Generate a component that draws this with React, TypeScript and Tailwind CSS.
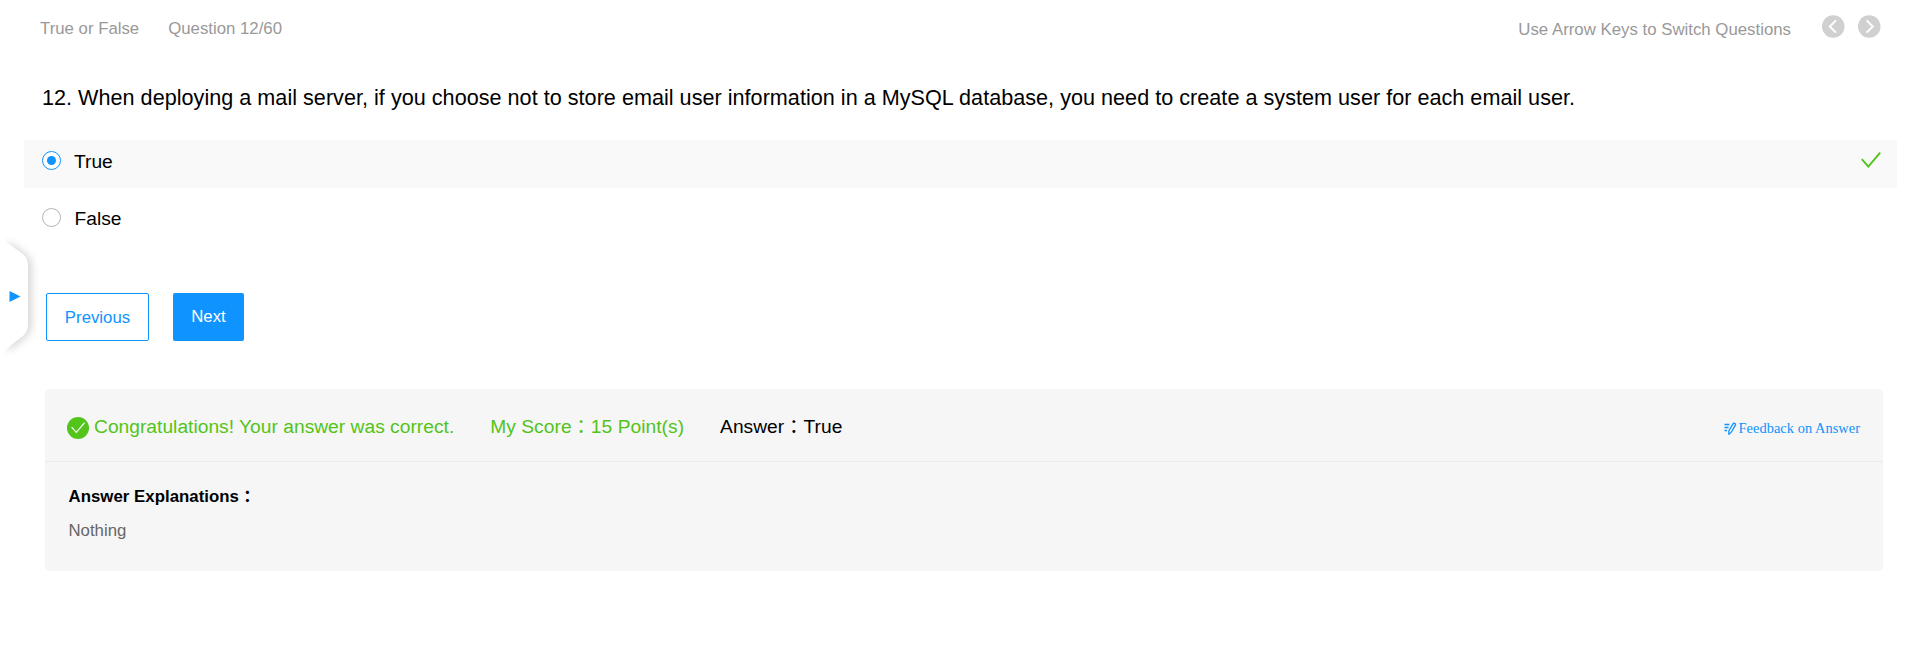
import React from "react";

const SANS = "font-['Liberation_Sans','Noto_Sans_CJK_JP',sans-serif]";

function ArrowButton({ dir }: { dir: "left" | "right" }) {
  return (
    <button aria-label={dir} className="block h-[23px] w-[23px]">
      <svg viewBox="0 0 23 23" className="h-full w-full">
        <circle cx="11.2" cy="11.5" r="11.3" fill="#d0d0d0" />
        <path
          d={dir === "left" ? "M14 5.4 L7.8 11.5 L14 17.6" : "M8.6 5.4 L14.8 11.5 L8.6 17.6"}
          fill="none"
          stroke="#fff"
          strokeWidth="2"
        />
      </svg>
    </button>
  );
}

function Radio({ checked }: { checked?: boolean }) {
  return checked ? (
    <span className="flex h-[19px] w-[19px] items-center justify-center rounded-full border border-[#0f93ff] bg-white">
      <span className="h-[9px] w-[9px] rounded-full bg-[#0f93ff]" />
    </span>
  ) : (
    <span className="block h-[19px] w-[19px] rounded-full border border-[#b4b4b4] bg-white" />
  );
}

function Colon() {
  return <span className="relative top-px">：</span>;
}

export default function App() {
  return (
    <div className={`relative h-[671px] w-full overflow-hidden bg-white text-black ${SANS}`}>
      <header className="flex h-[46px] items-start justify-between pr-[38px] pl-10 text-[16.8px] leading-6 text-[#999]">
        <div className="flex gap-[29px] pt-[17px]">
          <span>True or False</span>
          <span>Question 12/60</span>
        </div>
        <div className="flex items-start">
          <span className="mr-[31px] pt-[18px] tracking-[0.01px]">Use Arrow Keys to Switch Questions</span>
          <div className="flex gap-[13px] pt-[15px]">
            <ArrowButton dir="left" />
            <ArrowButton dir="right" />
          </div>
        </div>
      </header>

      <main>
        <h1 className="h-[94px] pt-[37px] pl-[42px] text-[21.6px] leading-[30px] tracking-[0.022px]">
          12. When deploying a mail server, if you choose not to store email user information in a MySQL database, you need to create a system user for each email user.
        </h1>

        <div className="mr-[22px] ml-6 flex h-12 items-start bg-[#f9f9f9] pr-4 pl-[18px] pt-[11px]">
          <Radio checked />
          <span className="ml-[13px] text-[19.2px] leading-[22px]">True</span>
          <svg viewBox="0 0 20 16" className="mt-px ml-auto h-4 w-5">
            <path d="M0.8 7.2 L7.3 14.6 L19.2 0.6" fill="none" stroke="#52c41a" strokeWidth="1.9" />
          </svg>
        </div>
        <div className="mt-[9px] mr-[22px] ml-6 flex h-12 items-start pl-[18px] pt-[11px]">
          <Radio />
          <span className="ml-[13.5px] text-[19.2px] leading-[22px]">False</span>
        </div>

        <div className="mt-12 ml-[46px] flex gap-6 text-[16.8px]">
          <button className="h-12 w-[103px] rounded-[2px] border border-[#0f93ff] bg-white pt-px text-[#0f93ff]">Previous</button>
          <button className="h-12 w-[71px] rounded-[2px] bg-[#0f93ff] text-white">Next</button>
        </div>

        <section className="mt-12 mr-9 ml-[45px] h-[182px] rounded-[5px] bg-[#f6f6f6]">
          <div className="flex h-[73px] items-start border-b border-[#ececec] pr-[23px] pl-[22px] text-[19.2px] leading-6">
            <svg viewBox="0 0 22 22" className="mt-7 mr-[5px] h-[22px] w-[22px]">
              <circle cx="11" cy="11" r="11" fill="#52c41a" />
              <path d="M4.6 10.2 L9.3 15.4 L17.6 5.6" fill="none" stroke="#fff" strokeWidth="1.2" />
            </svg>
            <span className="pt-[26px] tracking-[0.02px] text-[#52c41a]">Congratulations! Your answer was correct.</span>
            <span className="ml-9 pt-[26px] tracking-[0.04px] text-[#52c41a]">My Score<Colon />15 Point(s)</span>
            <span className="ml-9 pt-[26px] tracking-[0.03px]">Answer<Colon />True</span>
            <a className="ml-auto flex items-center pt-[27px] font-['Liberation_Serif',serif] text-[14.4px] leading-6 tracking-[0.04px] text-[#0f93ff]">
              <svg viewBox="0 0 13 13" className="mr-[2px] h-[13px] w-[13px]" fill="none" stroke="#0f93ff" strokeWidth="1.3">
                <path d="M0.5 2.5H5.5M0.5 5.5H4.5M0.5 8.5H3M4.8 9L9 1.8Q9.7 0.8 10.7 1.4Q12 2.1 11.4 3.2L7.2 10.4L4.9 12.2Z" />
              </svg>
              Feedback on Answer
            </a>
          </div>
          <div className="pl-[23.5px] text-[16.8px] leading-6">
            <p className="pt-[23px] font-bold tracking-[0.04px]">Answer Explanations<Colon /></p>
            <p className="pt-[10px] text-[#666]">Nothing</p>
          </div>
        </section>
      </main>

      <button aria-label="expand" className="absolute top-[230px] left-0 h-[130px] w-[45px]">
        <svg viewBox="0 0 45 130" className="h-full w-full">
          <defs>
            <filter id="tabShadow" x="-50%" y="-20%" width="220%" height="140%">
              <feGaussianBlur stdDeviation="4" />
            </filter>
          </defs>
          <path d="M4 11 L23.5 25 Q28 30 28 36 V95 Q28 101 23.5 106 L4 122Z" fill="#000" opacity="0.16" filter="url(#tabShadow)" transform="translate(3.5 0)" />
          <path d="M0 0 L5 11 L23.5 24.5 Q28 29 28 35 V95 Q28 101 23.5 105.5 L5 120 L0 130Z" fill="#fff" />
          <path d="M9.5 61 L20.5 66.5 L9.5 72Z" fill="#0f93ff" />
        </svg>
      </button>
    </div>
  );
}
